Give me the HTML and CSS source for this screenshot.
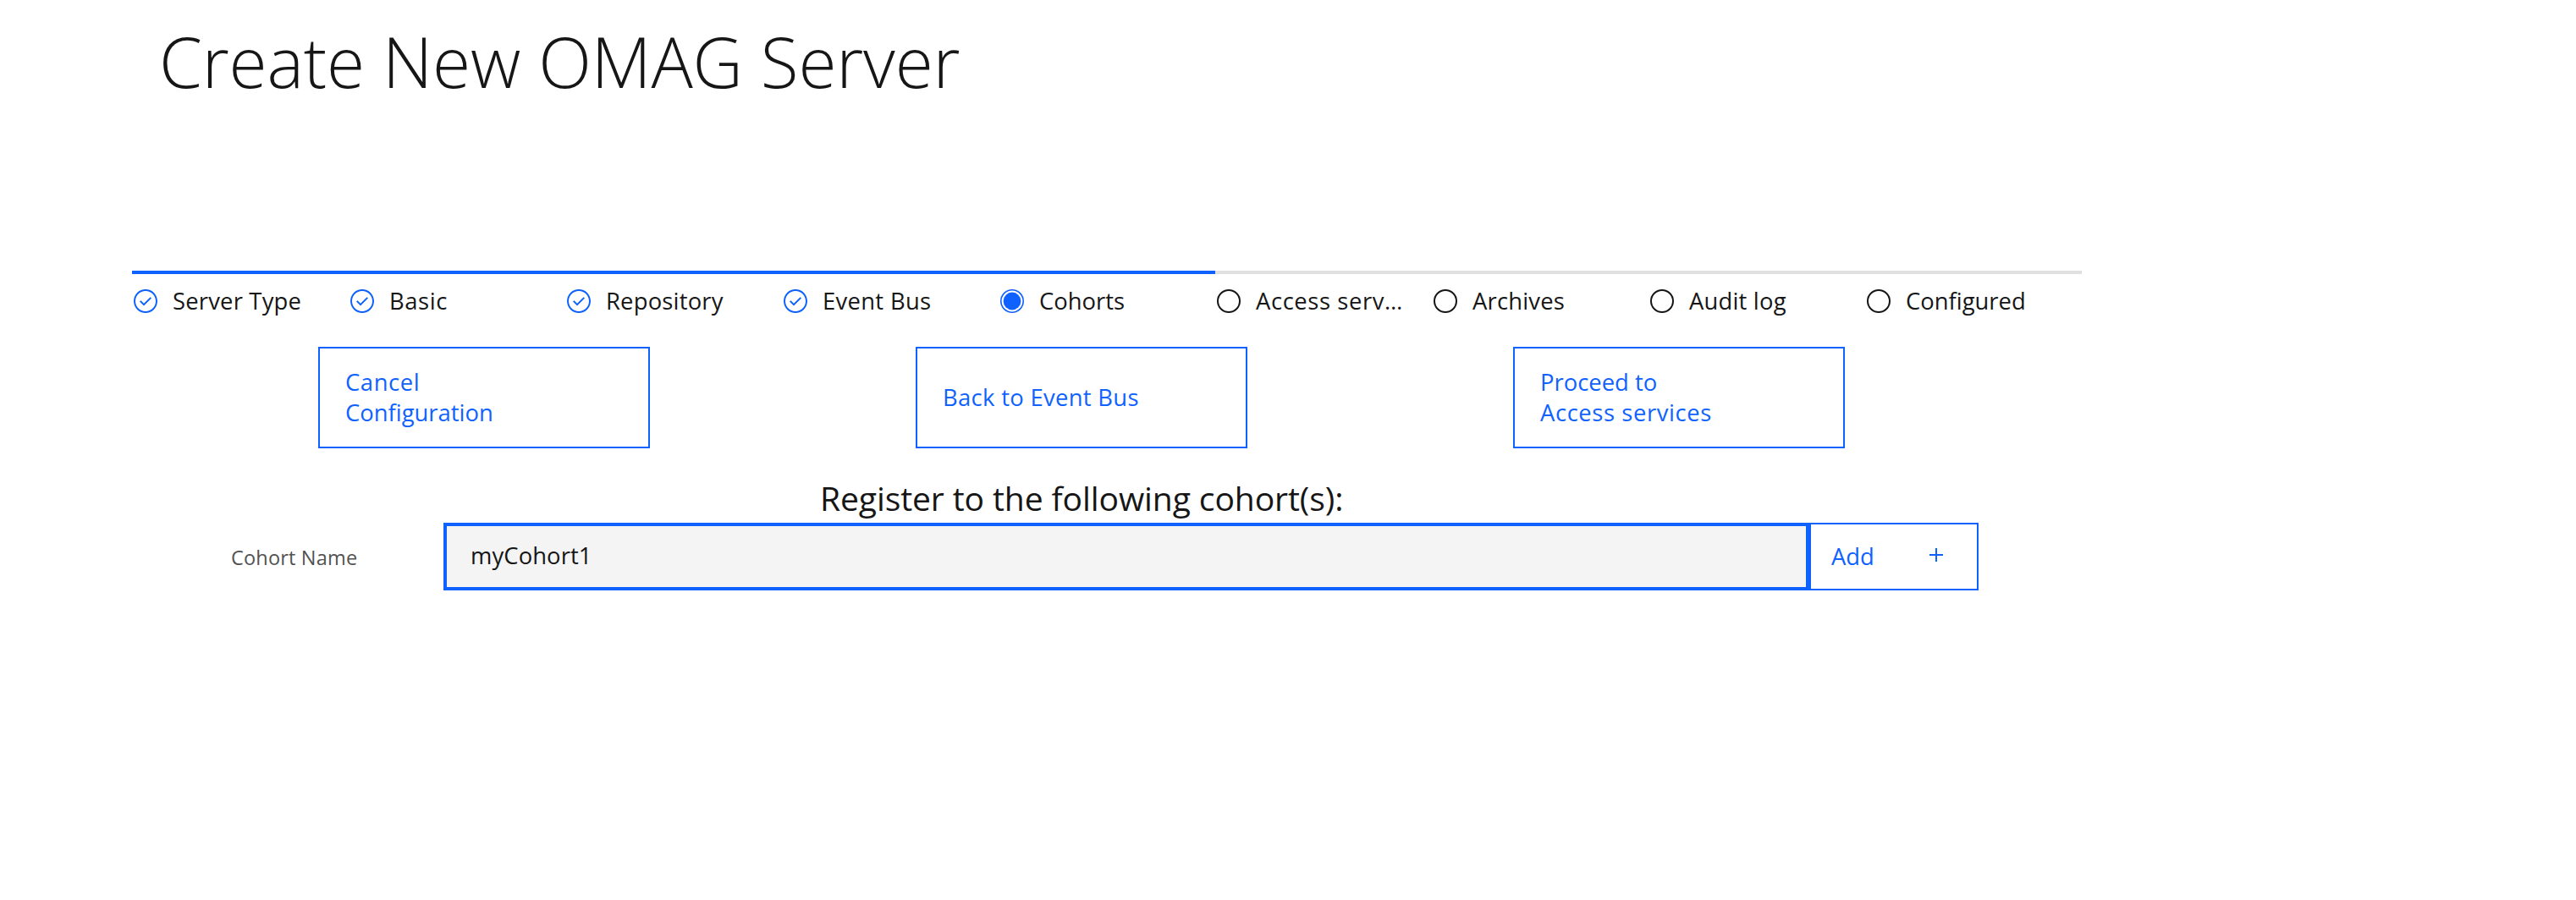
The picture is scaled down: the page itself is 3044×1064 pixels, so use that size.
FILE: index.html
```html
<!DOCTYPE html>
<html lang="en">
<head>
<meta charset="utf-8">
<title>Create New OMAG Server</title>
<link rel="stylesheet" href="styles.css">
</head>
<body>
<svg class="sprite" aria-hidden="true">
  <symbol id="complete" viewBox="0 0 16 16">
    <path d="M8 1C4.1 1 1 4.1 1 8s3.100 7 7 7 7-3.100 7-7-3.100-7-7-7zm0 13c-3.300 0-6-2.700-6-6s2.700-6 6-6 6 2.700 6 6-2.700 6-6 6z"/>
    <path d="M7 10.800L4.500 8.300 5.200 7.600 7 9.400 10.800 5.600 11.500 6.300z"/>
  </symbol>
  <symbol id="current" viewBox="0 0 16 16">
    <circle cx="8" cy="8" r="6.600" fill="none" stroke="currentColor" stroke-width=".8"/>
    <circle cx="8" cy="8" r="5.200"/>
  </symbol>
  <symbol id="incomplete" viewBox="0 0 16 16">
    <circle cx="8" cy="8" r="6.500" fill="none" stroke="currentColor"/>
  </symbol>
</svg>
<main class="page">
  <h1 class="title">Create New OMAG Server</h1>

  <ol class="progress">
    <li class="step step--done"><svg class="step-icon"><use href="#complete"/></svg><span class="step-label spaced-sm">Server Type</span></li>
    <li class="step step--done"><svg class="step-icon"><use href="#complete"/></svg><span class="step-label spaced-lg">Basic</span></li>
    <li class="step step--done"><svg class="step-icon"><use href="#complete"/></svg><span class="step-label spaced-sm">Repository</span></li>
    <li class="step step--done"><svg class="step-icon"><use href="#complete"/></svg><span class="step-label spaced-md">Event Bus</span></li>
    <li class="step step--done"><svg class="step-icon"><use href="#current"/></svg><span class="step-label">Cohorts</span></li>
    <li class="step"><svg class="step-icon"><use href="#incomplete"/></svg><span class="step-label spaced-lg">Access serv…</span></li>
    <li class="step"><svg class="step-icon"><use href="#incomplete"/></svg><span class="step-label spaced-sm">Archives</span></li>
    <li class="step"><svg class="step-icon"><use href="#incomplete"/></svg><span class="step-label spaced-sm">Audit log</span></li>
    <li class="step"><svg class="step-icon"><use href="#incomplete"/></svg><span class="step-label">Configured</span></li>
  </ol>

  <div class="actions">
    <button class="button" type="button"><span class="spaced-lg">Cancel</span><span>Configuration</span></button>
    <button class="button" type="button"><span class="spaced-md">Back to Event Bus</span></button>
    <button class="button" type="button"><span>Proceed to</span><span class="spaced-lg">Access services</span></button>
  </div>

  <h2 class="heading">Register to the following cohort(s):</h2>

  <form class="cohort">
    <label class="cohort-label" for="cohort-name">Cohort Name</label>
    <input class="cohort-input" id="cohort-name" type="text" value="myCohort1">
    <button class="add" type="button">Add
      <svg class="add-icon" viewBox="0 0 32 32"><path d="M17 15V8h-2v7H8v2h7v7h2v-7h7v-2z"/></svg>
    </button>
  </form>
</main>
</body>
</html>
```
FILE: styles.css
```css
* {
  box-sizing: border-box;
}

body {
  margin: 0;
  background: #fff;
  color: #161616;
  font-family: "Open Sans", "Noto Sans", sans-serif;
  font-size: 27.4px;
  line-height: 36px;
}

.sprite {
  display: none;
}

.page {
  width: 2460px;
  padding: 22px 0 0 156px;
}

.title {
  margin: 0 0 198px 32px;
  font-size: 82.1px;
  font-weight: 300;
  line-height: 100px;
  letter-spacing: -0.19px;
}

.progress {
  display: grid;
  grid-template-columns: repeat(9, 256px);
  margin: 0;
  padding: 0;
  list-style: none;
}

.step {
  display: flex;
  gap: 16px;
  height: 90px;
  padding-top: 14px;
  border-top: 4px solid #e0e0e0;
}

.step--done {
  border-color: #0f62fe;
}

.step-icon {
  width: 32px;
  height: 32px;
  margin-top: 2px;
  fill: currentColor;
}

.step--done .step-icon {
  color: #0f62fe;
}

.spaced-sm {
  letter-spacing: 0.2px;
}

.spaced-md {
  letter-spacing: 0.32px;
}

.spaced-lg {
  letter-spacing: 0.6px;
}

.actions {
  display: flex;
  gap: 314px;
  margin-left: 220px;
}

.button {
  display: flex;
  flex-direction: column;
  justify-content: center;
  align-items: flex-start;
  width: 392px;
  height: 120px;
  padding: 0 30px;
  border: 2px solid #0f62fe;
  background: #fff;
  color: #0f62fe;
  font: inherit;
}

.heading {
  margin: 35px 0 5px 813px;
  font-size: 39.1px;
  font-weight: 400;
  line-height: 48px;
  letter-spacing: -0.11px;
}

.cohort {
  display: flex;
  align-items: center;
  margin-left: 117px;
}

.cohort-label {
  width: 251px;
  padding-top: 2px;
  color: #525252;
  font-size: 23.5px;
  line-height: 32px;
  letter-spacing: 0.18px;
}

.cohort-input {
  width: 1614px;
  height: 80px;
  padding: 0 28px 4px;
  border: 4px solid #0f62fe;
  border-radius: 0;
  outline: 0;
  background: #f4f4f4;
  color: #161616;
  font: inherit;
  letter-spacing: 0.1px;
}

.add {
  display: flex;
  justify-content: space-between;
  align-items: center;
  width: 200px;
  height: 80px;
  padding: 0 32px 0 24px;
  border: 2px solid #0f62fe;
  background: #fff;
  color: #0f62fe;
  font: inherit;
}

.add-icon {
  width: 32px;
  height: 32px;
  margin-bottom: 4px;
  fill: currentColor;
}
```
